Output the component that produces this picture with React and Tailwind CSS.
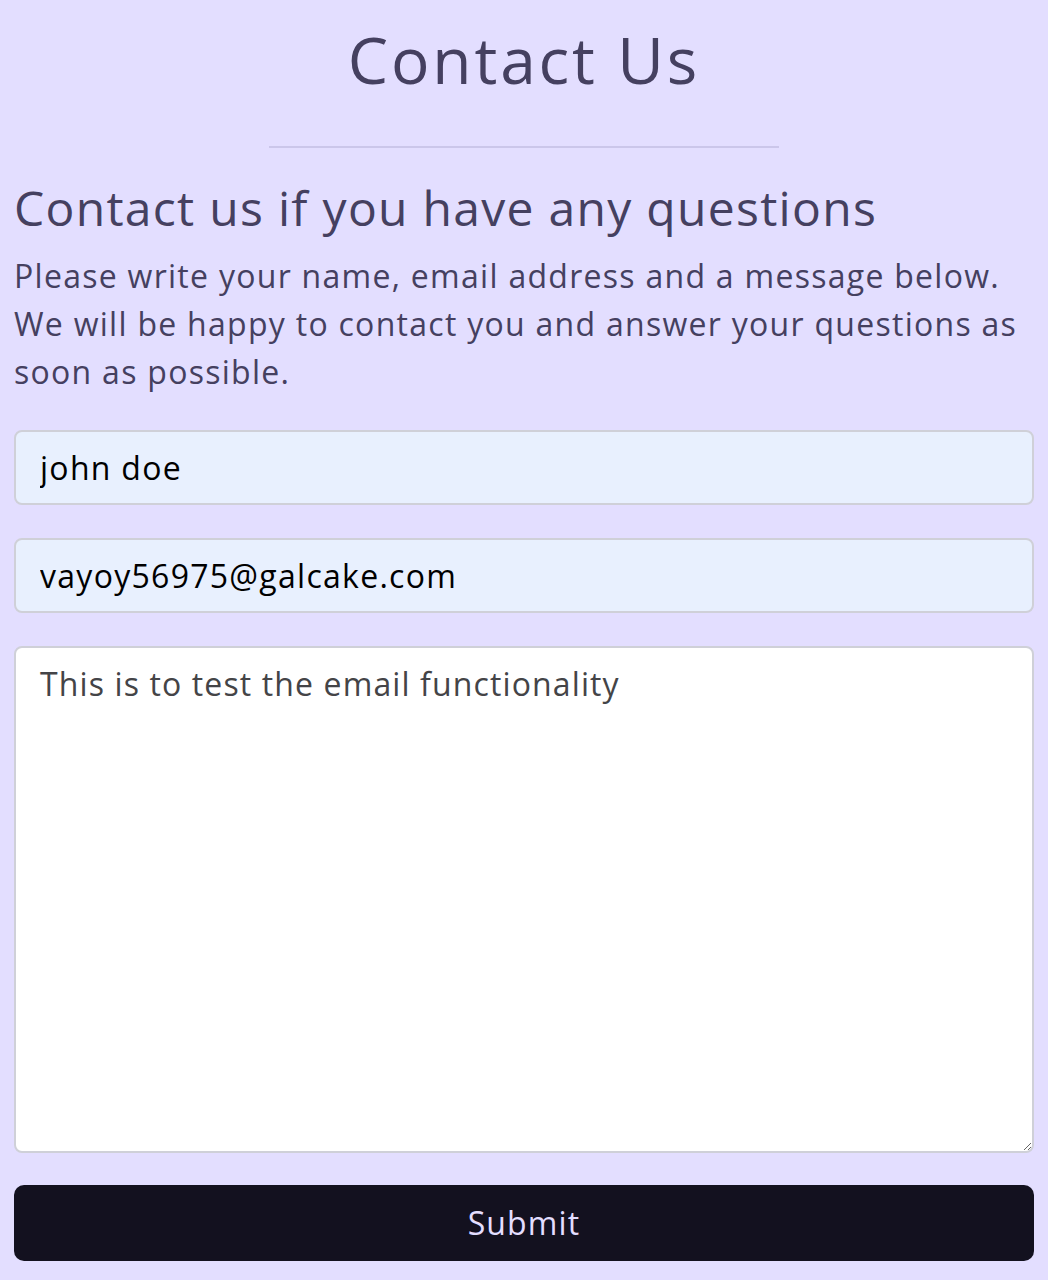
import React, { useState } from 'react';

const font = { fontFamily: '"Open Sans", "Liberation Sans", sans-serif' };

export default function App() {
  const [name, setName] = useState('john doe');
  const [email, setEmail] = useState('vayoy56975@galcake.com');
  const [message, setMessage] = useState('This is to test the email functionality');

  return (
    <div className="min-h-screen bg-[#e3deff] text-[#454060] px-[14px] tracking-[0.035em]" style={font}>
      {/* Title */}
      <h1 className="pt-[18px] text-center text-[64px] leading-[84px] font-normal tracking-[0.045em]">Contact Us</h1>
      <div className="mx-auto mt-[44px] h-[2px] w-[510px] bg-[#cbc6ea]" />

      {/* Intro */}
      <h2 className="mt-[28px] text-[48px] leading-[64px] font-normal tracking-[0.027em]">Contact us if you have any questions</h2>
      <p className="mt-[12px] text-[32px] leading-[48px] tracking-[0.04em]">
        Please write your name, email address and a message below. We will be happy to contact you and answer your questions as soon as possible.
      </p>

      {/* Form */}
      <form className="mt-[34px] flex flex-col" onSubmit={(e) => e.preventDefault()}>
        <input
          type="text"
          value={name}
          onChange={(e) => setName(e.target.value)}
          className="h-[75px] rounded-[8px] border-2 border-[#cfd0d8] bg-[#e8f0fe] px-[24px] text-[32px] tracking-[0.04em] text-black outline-none"
          style={font}
        />
        <input
          type="email"
          value={email}
          onChange={(e) => setEmail(e.target.value)}
          className="mt-[33px] h-[75px] rounded-[8px] border-2 border-[#cfd0d8] bg-[#e8f0fe] px-[24px] text-[32px] tracking-[0.04em] text-black outline-none"
          style={font}
        />
        <textarea
          value={message}
          onChange={(e) => setMessage(e.target.value)}
          className="mt-[33px] h-[507px] rounded-[8px] border-2 border-[#cfd0d8] bg-white px-[24px] pt-[12px] text-[32px] leading-[48px] tracking-[0.035em] text-[#444447] outline-none"
          style={font}
        />
        <button
          type="submit"
          className="mt-[32px] h-[76px] rounded-[10px] bg-[#13111f] text-[32px] tracking-[0.035em] text-[#e3deff]"
          style={font}
        >
          Submit
        </button>
      </form>
    </div>
  );
}
